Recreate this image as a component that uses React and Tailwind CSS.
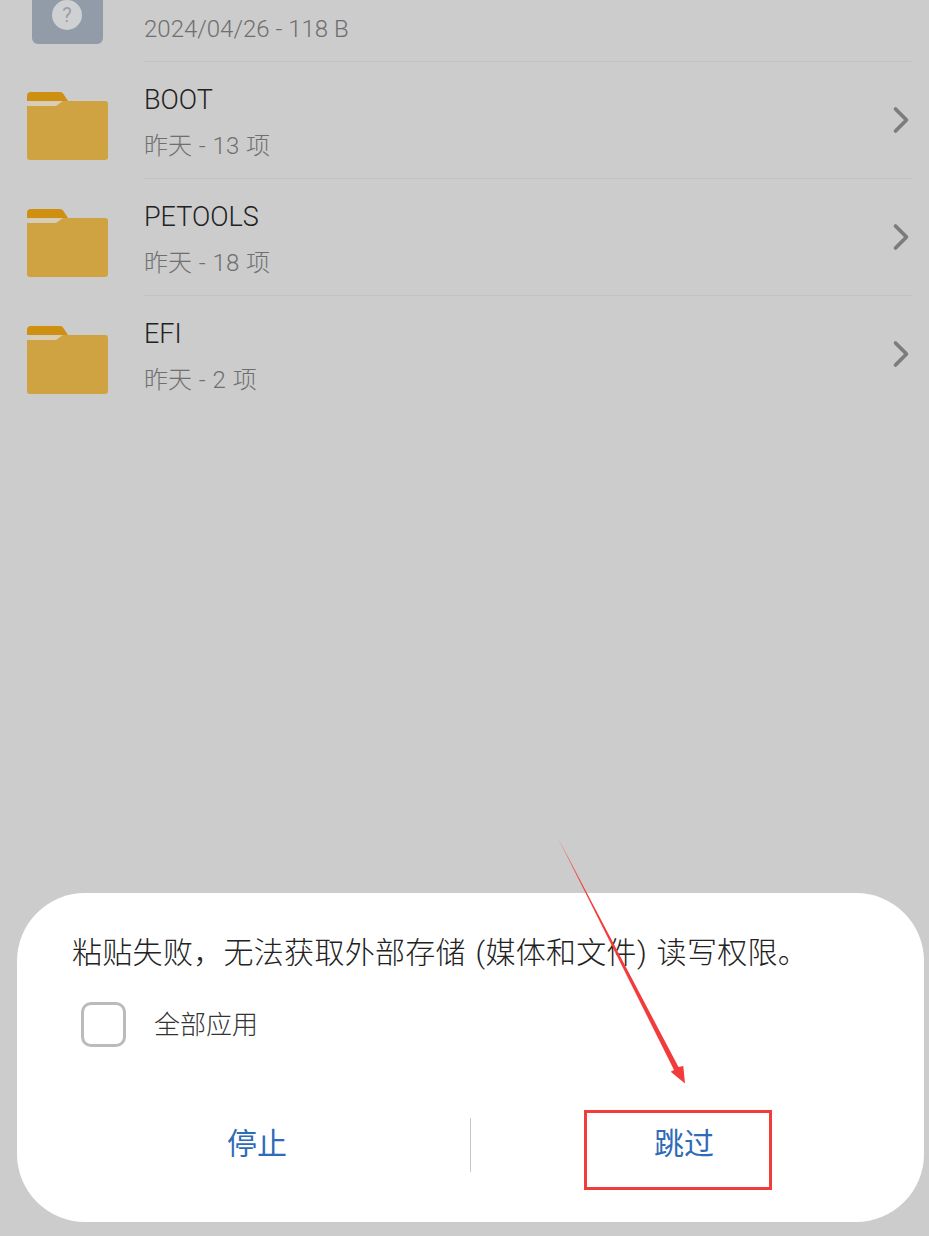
import React from 'react';
import { ChevronRight } from 'lucide-react';

const fontStack = { fontFamily: '"Roboto", "Noto Sans CJK SC", sans-serif' };

function FolderIcon() {
  return (
    <svg width="81" height="68" viewBox="0 0 81 68" className="shrink-0">
      <path d="M0 4a4 4 0 0 1 4-4h29a4 4 0 0 1 3.400 2l4.600 7H0z" fill="#cf8f10" />
      <path d="M3 10h31l-3 3.500H3z" fill="#dccdb0" />
      <path d="M0 14h29l7-5h42a3 3 0 0 1 3 3v53a3 3 0 0 1-3 3H3a3 3 0 0 1-3-3z" fill="#cfa342" />
    </svg>
  );
}

function FolderRow({ name, sub, last }) {
  return (
    <div className="flex h-[117px] items-center pl-[27px] pr-[17px]">
      <div className="mt-[11px]">
        <FolderIcon />
      </div>
      <div className={`ml-[36px] flex h-full flex-1 items-center justify-between border-b ${last ? 'border-transparent' : 'border-[#c2c2c2]'}`}>
        <div className="mt-[6px]">
          <p className="text-[27px] font-light leading-[36px] text-[#222222]">{name}</p>
          <p className="mt-[10px] text-[24px] font-light leading-[36px] text-[#6f6f6f] [word-spacing:1px]">{sub}</p>
        </div>
        <ChevronRight size={44} strokeWidth={2} className="-mr-[11px] text-[#7c7c7c]" />
      </div>
    </div>
  );
}

export default function App() {
  return (
    <div className="relative flex h-[1236px] flex-col overflow-hidden bg-[#cccccc]" style={fontStack}>
      {/* 上面被截掉的檔案 */}
      <div className="flex h-[62px] pl-[32px] pr-[17px]">
        <div className="relative h-[44px] w-[71px] shrink-0 rounded-b-[6px] bg-[#919ca8]">
          <div className="absolute left-[20px] top-0 flex h-[30px] w-[30px] items-center justify-center rounded-full bg-[#cfd0d1] text-[20px] font-normal leading-none text-[#9a9fa6]">
            ?
          </div>
        </div>
        <div className="ml-[41px] flex-1 border-b border-[#c2c2c2]">
          <p className="mt-[11px] text-[24px] font-light leading-[36px] text-[#6f6f6f]">2024/04/26 - 118 B</p>
        </div>
      </div>

      <FolderRow name="BOOT" sub="昨天 - 13 项" />
      <FolderRow name="PETOOLS" sub="昨天 - 18 项" />
      <FolderRow name="EFI" sub="昨天 - 2 项" last />

      {/* 對話框 */}
      <div className="mx-[17px] mb-[14px] mt-auto flex h-[329px] w-[907px] flex-col rounded-[68px] bg-white pl-[55px]">
        <p className="mt-[40px] whitespace-nowrap text-[30px] font-light leading-[40px] tracking-[0.3px] text-[#222222] [word-spacing:2px]">
          粘贴失败，无法获取外部存储 (媒体和文件) 读写权限。
        </p>
        <div className="mt-[29px] flex items-center pl-[9px]">
          <div className="h-[45px] w-[45px] rounded-[10px] border-[3px] border-[#bbbbbb]" />
          <span className="ml-[28px] text-[26px] font-light leading-[36px] text-[#333333]">全部应用</span>
        </div>
        <div className="-ml-[55px] mt-[71px] flex h-[54px] items-center px-[27px]">
          <button className="-mt-[3px] flex-1 text-[30px] font-normal leading-[40px] text-[#2f6bb8]">停止</button>
          <div className="h-[54px] w-px bg-[#c8c8c8]" />
          <button className="-mt-[3px] flex-1 text-[30px] font-normal leading-[40px] text-[#2f6bb8]">跳过</button>
        </div>
      </div>

      {/* 紅色標註 */}
      <div className="absolute left-[584px] top-[1110px] h-[80px] w-[188px] border-[3px] border-[#f23c3c]" />
      <svg className="absolute left-0 top-0" width="929" height="1236">
        <path d="M558 838L678.500 1067L683.300 1066L685 1083.500L670.700 1071.700L674 1070Z" fill="#f23c3c" />
      </svg>
    </div>
  );
}
